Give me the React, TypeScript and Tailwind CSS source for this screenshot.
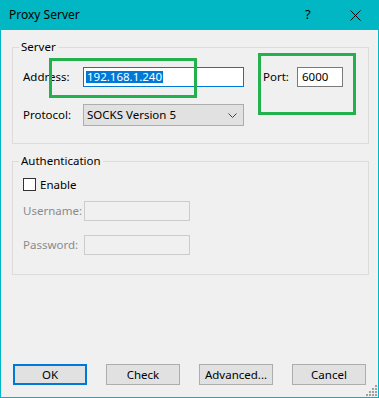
import React from "react";

const font = { fontFamily: '"Noto Sans", "Liberation Sans", sans-serif' };

function Button({ label, primary = false }: { label: string; primary?: boolean }) {
  return (
    <button
      className={
        primary
          ? "w-[74px] h-[21px] bg-[#e1e1e1] border-2 border-[#0078d7] text-[11.5px] leading-none text-black"
          : "w-[74px] h-[21px] bg-[#e1e1e1] border border-[#adadad] text-[11.5px] leading-none text-black"
      }
    >
      {label}
    </button>
  );
}

export default function App() {
  return (
    <div
      className="relative w-[379px] h-[398px] bg-[#00b7c3] px-px pb-px flex flex-col text-black"
      style={font}
    >
      {/* Title bar */}
      <div className="h-[30px] flex items-center pl-[8px] text-[12px]">
        <span className="flex-1">Proxy Server</span>
        <span className="w-[8px] text-[13px] mr-[37px]">?</span>
        <svg width="11" height="11" viewBox="0 0 11 11" className="mr-[17px]">
          <path d="M0.5 0.5 L10.5 10.5 M10.5 0.5 L0.5 10.5" stroke="#000" strokeWidth="1" />
        </svg>
      </div>

      {/* Body */}
      <div className="flex-1 bg-[#f0f0f0] flex flex-col pl-[11px] text-[11.5px]">
        {/* Server group */}
        <fieldset className="mt-[9px] w-[357px] h-[105px] border border-[#dcdcdc]">
          <legend className="ml-[6px] px-[2px] leading-[16px]">Server</legend>
          <div className="mt-[12px] flex items-center h-[20px]">
            <span className="ml-[10px] w-[60px] shrink-0">Address:</span>
            <div className="w-[161px] h-[20px] bg-white border border-[#0078d7] flex items-center pl-[2px]">
              <span className="bg-[#0078d7] text-white leading-[12px] px-px">192.168.1.240</span>
            </div>
            <span className="ml-[19px] w-[34px] shrink-0">Port:</span>
            <div className="w-[46px] h-[20px] bg-white border border-[#7a7a7a] flex items-center pl-[4px]">
              6000
            </div>
          </div>
          <div className="mt-[17px] flex items-center h-[22px]">
            <span className="ml-[10px] w-[60px] shrink-0">Protocol:</span>
            <div className="w-[161px] h-[22px] bg-[#e1e1e1] border border-[#adadad] flex items-center pl-[3px] pr-[6px]">
              <span className="flex-1">SOCKS Version 5</span>
              <svg width="9" height="5" viewBox="0 0 9 5">
                <path d="M0.5 0.5 L4.5 4.5 L8.5 0.5" stroke="#444" strokeWidth="1" fill="none" />
              </svg>
            </div>
          </div>
        </fieldset>

        {/* Authentication group */}
        <fieldset className="mt-[9px] w-[357px] h-[122px] border border-[#dcdcdc]">
          <legend className="ml-[6px] px-[2px] leading-[16px]">Authentication</legend>
          <div className="mt-[9px] flex items-center h-[13px]">
            <span className="ml-[10px] w-[13px] h-[13px] bg-white border border-[#333]" />
            <span className="ml-[4px]">Enable</span>
          </div>
          <div className="mt-[10px] flex items-center h-[20px] text-[#8a8a8a]">
            <span className="ml-[10px] w-[61px] shrink-0">Username:</span>
            <div className="w-[106px] h-[20px] border border-[#cccccc]" />
          </div>
          <div className="mt-[14px] flex items-center h-[20px] text-[#8a8a8a]">
            <span className="ml-[10px] w-[61px] shrink-0">Password:</span>
            <div className="w-[106px] h-[20px] border border-[#cccccc]" />
          </div>
        </fieldset>

        {/* Buttons */}
        <div className="mt-auto mb-[12px] ml-px flex gap-[19px]">
          <Button label="OK" primary />
          <Button label="Check" />
          <Button label="Advanced..." />
          <Button label="Cancel" />
        </div>
      </div>

      {/* Resize grip */}
      <svg className="absolute right-[2px] bottom-[2px]" width="11" height="11" viewBox="0 0 11 11">
        {[
          [9, 1], [9, 4], [9, 7], [9, 10], [6, 4], [6, 7], [6, 10], [3, 7], [3, 10], [0, 10],
        ].map(([x, y], i) => (
          <rect key={i} x={x} y={y - 1} width="2" height="2" fill="#a0a0a0" />
        ))}
      </svg>

      {/* Green annotation boxes */}
      <div className="absolute left-[49px] top-[58px] w-[148px] h-[40px] border-[3px] border-[#22b14c]" />
      <div className="absolute left-[258px] top-[53px] w-[98px] h-[62px] border-[3px] border-[#22b14c]" />
    </div>
  );
}
